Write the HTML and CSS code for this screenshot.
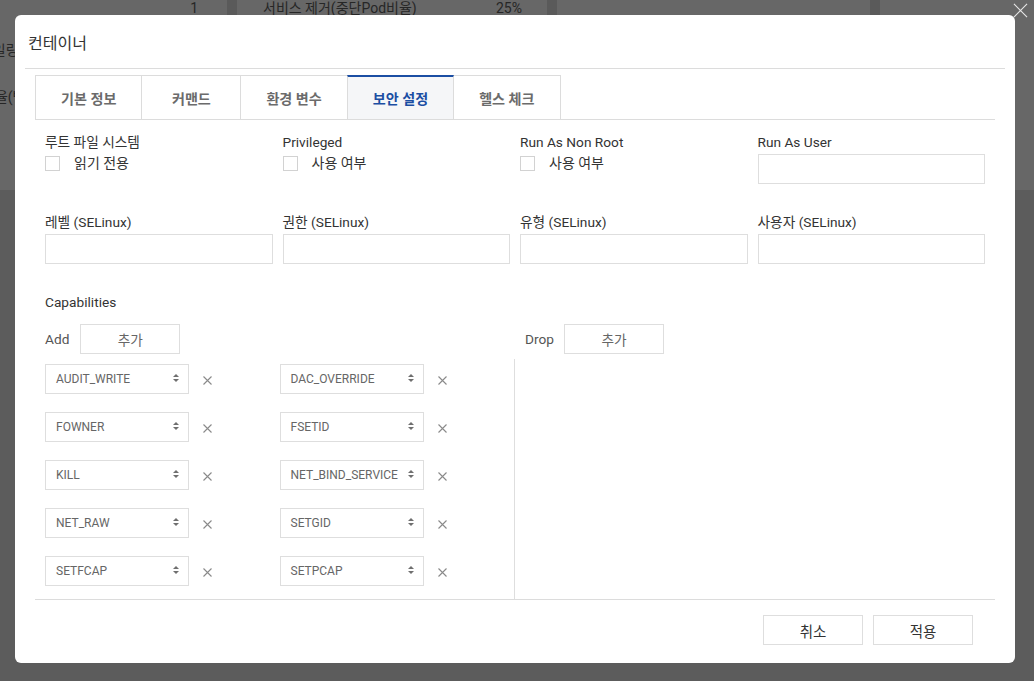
FILE: index.html
```html
<!DOCTYPE html>
<html lang="ko">
<head>
<meta charset="utf-8">
<title>컨테이너</title>
<link rel="stylesheet" href="styles.css">
</head>
<body>
<div class="page">
  <div class="page-top">
    <div class="pcol pcol-1">
      <div class="prow prow-1"><div class="pside"><span class="ps-1">최소 수</span></div><div class="pval">1</div></div>
      <div class="prow prow-2"><div class="pside"><span class="ps-2">스케일링</span></div></div>
      <div class="prow prow-3"><div class="pside"><span class="ps-3">비율(백분율)</span></div></div>
    </div>
    <div class="pcol pcol-2">
      <div class="prow prow-1 prow-split"><span>서비스 제거(중단Pod비율)</span><span>25%</span></div>
    </div>
    <div class="pcol pcol-3"></div>
    <div class="pcol pcol-4"></div>
  </div>

  <div class="modal">
    <div class="modal-head"><h2 class="modal-title">컨테이너</h2></div>
    <div class="modal-body">
      <div class="tabs">
        <div class="tab">기본 정보</div>
        <div class="tab">커맨드</div>
        <div class="tab">환경 변수</div>
        <div class="tab active">보안 설정</div>
        <div class="tab">헬스 체크</div>
      </div>
      <div class="tab-panel">
        <div class="form-grid">
          <div class="field">
            <div class="field-label">루트 파일 시스템</div>
            <div class="check"><span class="check-box"></span><span>읽기 전용</span></div>
          </div>
          <div class="field">
            <div class="field-label">Privileged</div>
            <div class="check"><span class="check-box"></span><span>사용 여부</span></div>
          </div>
          <div class="field">
            <div class="field-label">Run As Non Root</div>
            <div class="check"><span class="check-box"></span><span>사용 여부</span></div>
          </div>
          <div class="field">
            <div class="field-label">Run As User</div>
            <div class="text-input"></div>
          </div>
          <div class="field">
            <div class="field-label">레벨 (SELinux)</div>
            <div class="text-input"></div>
          </div>
          <div class="field">
            <div class="field-label">권한 (SELinux)</div>
            <div class="text-input"></div>
          </div>
          <div class="field">
            <div class="field-label">유형 (SELinux)</div>
            <div class="text-input"></div>
          </div>
          <div class="field">
            <div class="field-label">사용자 (SELinux)</div>
            <div class="text-input"></div>
          </div>
        </div>

        <div class="caps-title">Capabilities</div>
        <div class="caps-head">
          <div class="caps-ctl"><span>Add</span><button class="btn btn-add">추가</button></div>
          <div class="caps-ctl caps-drop"><span>Drop</span><button class="btn btn-add">추가</button></div>
        </div>
        <div class="caps-body">
          <div class="cap-list">
            <div class="cap-item"><div class="select"><span>AUDIT_WRITE</span><svg class="sel-arrow" viewBox="0 0 6 8"><polygon points="0,3 3,0 6,3"/><polygon points="0,5 3,8 6,5"/></svg></div><svg class="x-icon" viewBox="0 0 9 9"><path d="M0.5 0.5 L8.5 8.5 M8.5 0.5 L0.5 8.5"/></svg></div>
            <div class="cap-item"><div class="select"><span>DAC_OVERRIDE</span><svg class="sel-arrow" viewBox="0 0 6 8"><polygon points="0,3 3,0 6,3"/><polygon points="0,5 3,8 6,5"/></svg></div><svg class="x-icon" viewBox="0 0 9 9"><path d="M0.5 0.5 L8.5 8.5 M8.5 0.5 L0.5 8.5"/></svg></div>
            <div class="cap-item"><div class="select"><span>FOWNER</span><svg class="sel-arrow" viewBox="0 0 6 8"><polygon points="0,3 3,0 6,3"/><polygon points="0,5 3,8 6,5"/></svg></div><svg class="x-icon" viewBox="0 0 9 9"><path d="M0.5 0.5 L8.5 8.5 M8.5 0.5 L0.5 8.5"/></svg></div>
            <div class="cap-item"><div class="select"><span>FSETID</span><svg class="sel-arrow" viewBox="0 0 6 8"><polygon points="0,3 3,0 6,3"/><polygon points="0,5 3,8 6,5"/></svg></div><svg class="x-icon" viewBox="0 0 9 9"><path d="M0.5 0.5 L8.5 8.5 M8.5 0.5 L0.5 8.5"/></svg></div>
            <div class="cap-item"><div class="select"><span>KILL</span><svg class="sel-arrow" viewBox="0 0 6 8"><polygon points="0,3 3,0 6,3"/><polygon points="0,5 3,8 6,5"/></svg></div><svg class="x-icon" viewBox="0 0 9 9"><path d="M0.5 0.5 L8.5 8.5 M8.5 0.5 L0.5 8.5"/></svg></div>
            <div class="cap-item"><div class="select"><span>NET_BIND_SERVICE</span><svg class="sel-arrow" viewBox="0 0 6 8"><polygon points="0,3 3,0 6,3"/><polygon points="0,5 3,8 6,5"/></svg></div><svg class="x-icon" viewBox="0 0 9 9"><path d="M0.5 0.5 L8.5 8.5 M8.5 0.5 L0.5 8.5"/></svg></div>
            <div class="cap-item"><div class="select"><span>NET_RAW</span><svg class="sel-arrow" viewBox="0 0 6 8"><polygon points="0,3 3,0 6,3"/><polygon points="0,5 3,8 6,5"/></svg></div><svg class="x-icon" viewBox="0 0 9 9"><path d="M0.5 0.5 L8.5 8.5 M8.5 0.5 L0.5 8.5"/></svg></div>
            <div class="cap-item"><div class="select"><span>SETGID</span><svg class="sel-arrow" viewBox="0 0 6 8"><polygon points="0,3 3,0 6,3"/><polygon points="0,5 3,8 6,5"/></svg></div><svg class="x-icon" viewBox="0 0 9 9"><path d="M0.5 0.5 L8.5 8.5 M8.5 0.5 L0.5 8.5"/></svg></div>
            <div class="cap-item"><div class="select"><span>SETFCAP</span><svg class="sel-arrow" viewBox="0 0 6 8"><polygon points="0,3 3,0 6,3"/><polygon points="0,5 3,8 6,5"/></svg></div><svg class="x-icon" viewBox="0 0 9 9"><path d="M0.5 0.5 L8.5 8.5 M8.5 0.5 L0.5 8.5"/></svg></div>
            <div class="cap-item"><div class="select"><span>SETPCAP</span><svg class="sel-arrow" viewBox="0 0 6 8"><polygon points="0,3 3,0 6,3"/><polygon points="0,5 3,8 6,5"/></svg></div><svg class="x-icon" viewBox="0 0 9 9"><path d="M0.5 0.5 L8.5 8.5 M8.5 0.5 L0.5 8.5"/></svg></div>
          </div>
          <div class="cap-list cap-list-drop"></div>
        </div>
      </div>
      <div class="modal-foot">
        <button class="btn btn-foot">취소</button>
        <button class="btn btn-foot">적용</button>
      </div>
    </div>
  </div>

  <svg class="close" viewBox="0 0 16 16"><path d="M1 1 L15 15 M15 1 L1 15"/></svg>
</div>
</body>
</html>
```

FILE: styles.css
```css
* { box-sizing: border-box; }
html, body { margin: 0; padding: 0; }
body {
  width: 1034px;
  height: 681px;
  overflow: hidden;
  font-family: Roboto, "Noto Sans CJK KR", sans-serif;
  font-size: 13.7px;
  color: #333;
}

/* dimmed background page */
.page {
  position: relative;
  width: 1034px;
  height: 681px;
  background: #5c5c5c;
  overflow: hidden;
}
.page-top {
  display: flex;
  gap: 10px;
  height: 190px;
  background: #5a5a5a;
}
.pcol {
  background: #676767;
  color: #262626;
  font-size: 14px;
}
.pcol-1 { width: 227px; }
.pcol-2 { width: 310px; }
.pcol-3 { width: 313px; }
.pcol-4 { flex: 1; }
.prow {
  display: flex;
  align-items: center;
  height: 18px;
  line-height: 18px;
  white-space: nowrap;
}
.prow-1 { margin-top: -1px; }
.prow-2 { margin-top: 24px; }
.prow-3 { margin-top: 29px; }
.pside {
  width: 15px;
  flex: none;
  overflow: hidden;
  display: flex;
  justify-content: flex-start;
}
.pside span { flex: none; }
.ps-1 { margin-left: -43px; }
.ps-2 { margin-left: -33px; }
.ps-3 { margin-left: -18px; }
.pval {
  flex: 1;
  text-align: right;
  padding-right: 29px;
}
.prow-split {
  justify-content: space-between;
  padding: 0 25px 0 26px;
}

/* modal */
.modal {
  position: absolute;
  left: 15px;
  top: 15px;
  width: 1000px;
  background: #fff;
  border-radius: 6px;
}
.modal-head {
  margin: 0 10px;
  height: 54px;
  padding: 1px 3px 0;
  border-bottom: 1px solid #dcdcdc;
  display: flex;
  align-items: center;
}
.modal-title {
  margin: 0;
  font-size: 16px;
  font-weight: 400;
  color: #333;
}
.modal-body {
  padding: 6px 20px 0;
}

.tabs {
  display: flex;
  height: 45px;
  border-bottom: 1px solid #dcdcdc;
}
.tab {
  height: 44px;
  min-width: 100px;
  padding: 0 25px;
  margin-left: -1px;
  border: 1px solid #dcdcdc;
  border-bottom: 0;
  display: flex;
  align-items: center;
  justify-content: center;
  font-size: 14.1px;
  font-weight: 700;
  color: #6b6b6b;
  background: #fff;
  white-space: nowrap;
}
.tab:first-child { margin-left: 0; }
.tab.active {
  border-top: 2px solid #1b4ea3;
  color: #1b4ea3;
  background: #f5f6f8;
  position: relative;
  z-index: 1;
}

.tab-panel {
  padding: 14px 10px 0;
  border-bottom: 1px solid #dcdcdc;
}
.form-grid {
  display: grid;
  grid-template-columns: repeat(4, 1fr);
  column-gap: 10px;
  row-gap: 30px;
}
.field-label {
  height: 16px;
  line-height: 16px;
  margin-bottom: 4px;
  white-space: nowrap;
  color: #333;
}
.text-input {
  height: 30px;
  border: 1px solid #dedede;
}
.check {
  display: flex;
  align-items: center;
  gap: 14px;
  height: 18px;
  line-height: 18px;
  font-size: 14px;
  color: #333;
}
.check-box {
  width: 15px;
  height: 15px;
  border: 1px solid #d2d2d2;
  background: #fff;
}

.caps-title {
  margin-top: 30px;
  height: 16px;
  line-height: 16px;
}
.caps-head {
  display: grid;
  grid-template-columns: 1fr 1fr;
  margin-top: 14px;
}
.caps-ctl {
  display: flex;
  align-items: center;
  gap: 11px;
  height: 30px;
  color: #555;
}
.caps-drop {
  padding-left: 10px;
  gap: 10px;
}
.btn {
  height: 30px;
  border: 1px solid #dedede;
  background: #fff;
  font-family: inherit;
  font-size: 13.7px;
  padding: 0;
  margin: 0;
}
.btn-add {
  width: 100px;
  color: #666;
}
.caps-body {
  display: grid;
  grid-template-columns: 1fr 1fr;
  margin-top: 5px;
}
.cap-list {
  display: grid;
  grid-template-columns: 1fr 1fr;
  align-content: start;
  row-gap: 18px;
  padding: 5px 0 13px;
  border-right: 1px solid #dedede;
  min-height: 240px;
}
.cap-list-drop { border-right: 0; }
.cap-item {
  display: flex;
  align-items: center;
  gap: 14px;
}
.select {
  width: 144px;
  height: 30px;
  border: 1px solid #dedede;
  padding: 0 9px 0 10px;
  display: flex;
  align-items: center;
  justify-content: space-between;
  font-size: 12px;
  color: #666;
  white-space: nowrap;
}
.sel-arrow {
  width: 6px;
  height: 8px;
  fill: #6f6f6f;
  flex: none;
  margin-top: -3px;
}
.x-icon {
  width: 9px;
  height: 9px;
  stroke: #8a8a8a;
  stroke-width: 1.1;
  fill: none;
  flex: none;
  margin-top: 2px;
}

.modal-foot {
  display: flex;
  justify-content: flex-end;
  gap: 10px;
  padding: 15px 22px 18px 0;
}
.btn-foot {
  width: 100px;
  font-size: 14.5px;
  color: #333;
}

.close {
  position: absolute;
  top: 3px;
  right: 6px;
  width: 15px;
  height: 15px;
  stroke: #e6e6e6;
  stroke-width: 1.2;
  fill: none;
}
```
